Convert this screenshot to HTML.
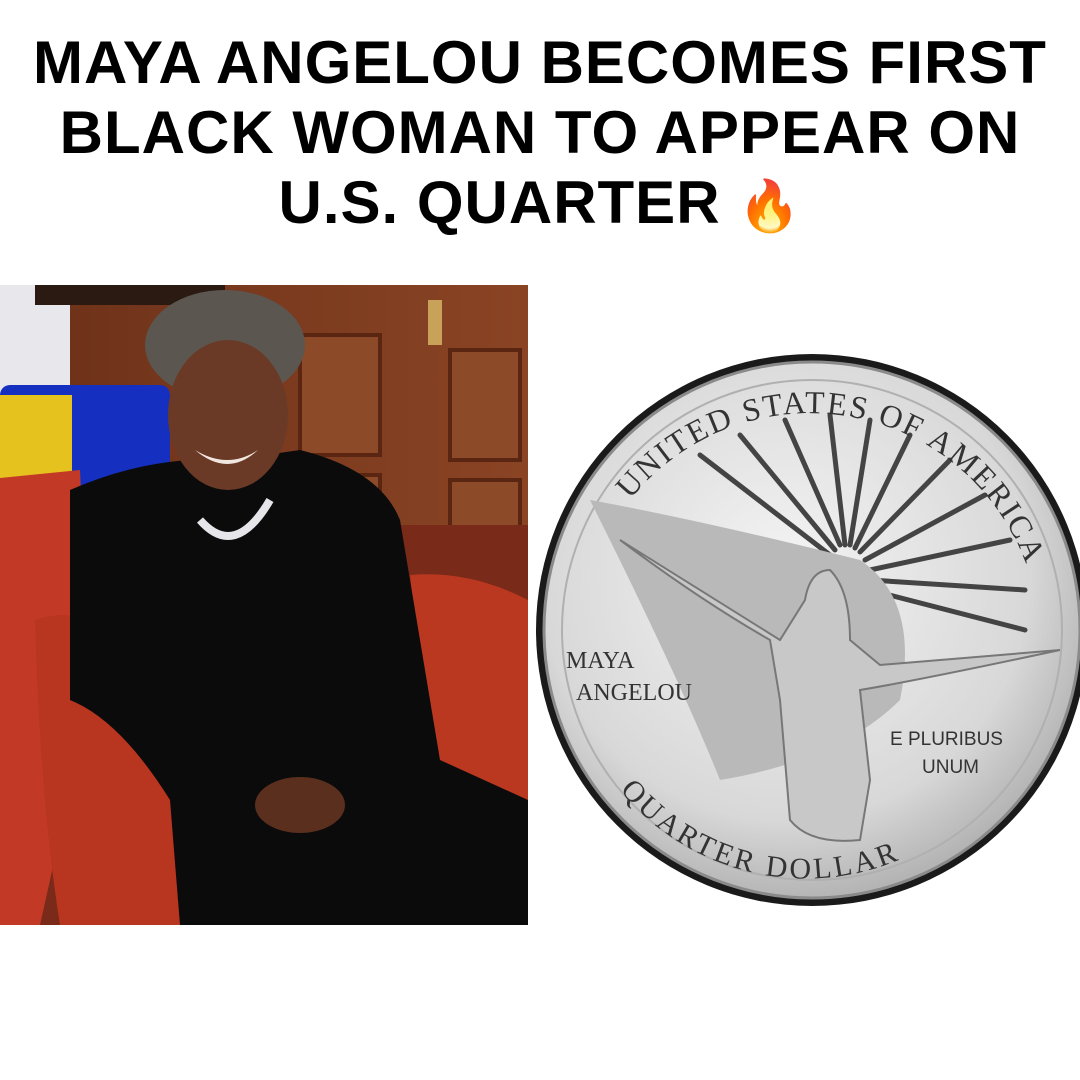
<!DOCTYPE html>
<html><head><meta charset="utf-8"><style>
html,body{margin:0;padding:0;background:#fff;width:1080px;height:1080px;overflow:hidden}
h1{position:absolute;top:28px;left:0;width:1080px;margin:0;text-align:center;font-family:"Liberation Sans",Arial,sans-serif;font-weight:900;font-size:60px;line-height:70px;color:#000;letter-spacing:1px;white-space:nowrap}
svg{position:absolute;left:0;top:0}
</style></head><body>
<svg width="1080" height="1080" viewBox="0 0 1080 1080">
<defs>
<radialGradient id="coin" cx="45%" cy="40%" r="65%"><stop offset="0" stop-color="#f4f4f4"/><stop offset="0.7" stop-color="#d8d8d8"/><stop offset="1" stop-color="#a9a9a9"/></radialGradient>
<linearGradient id="wood" x1="0" x2="1"><stop offset="0" stop-color="#6b3018"/><stop offset="1" stop-color="#8a4424"/></linearGradient>
<clipPath id="ph"><rect x="0" y="285" width="528" height="640"/></clipPath>
</defs>
<g clip-path="url(#ph)">
<rect x="0" y="285" width="528" height="640" fill="url(#wood)"/>
<rect x="0" y="285" width="70" height="110" fill="#e8e8ec"/>
<rect x="35" y="285" width="190" height="20" fill="#2a1a12"/>
<rect x="300" y="335" width="80" height="120" fill="#8d4a28" stroke="#5a2612" stroke-width="4"/>
<rect x="300" y="475" width="80" height="110" fill="#8d4a28" stroke="#5a2612" stroke-width="4"/>
<rect x="450" y="350" width="70" height="110" fill="#8d4a28" stroke="#5a2612" stroke-width="4"/>
<rect x="450" y="480" width="70" height="120" fill="#8d4a28" stroke="#5a2612" stroke-width="4"/>
<rect x="428" y="300" width="14" height="45" fill="#c9a25a"/>
<rect x="0" y="385" width="170" height="140" rx="10" fill="#1530c0"/>
<rect x="0" y="395" width="72" height="90" fill="#e6c21e"/>
<rect x="0" y="525" width="528" height="400" fill="#7a2a18"/>
<path d="M0 478 L80 470 L90 700 L40 925 L0 925Z" fill="#c23a26"/>
<path d="M35 620 Q90 600 180 660 L230 925 L60 925 Q40 800 35 620Z" fill="#b8351f"/>
<path d="M410 575 Q470 570 528 600 L528 810 L430 760Z" fill="#b9381f"/>
<path d="M70 490 Q150 455 230 460 L300 450 Q380 470 400 520 L430 700 L440 760 L528 800 L528 925 L180 925 L170 800 Q120 720 70 700Z" fill="#0b0b0c"/>
<ellipse cx="225" cy="345" rx="80" ry="55" fill="#5b5650"/>
<ellipse cx="228" cy="415" rx="60" ry="75" fill="#6b3a26"/>
<path d="M195 450 Q228 470 258 450 Q228 478 195 450Z" fill="#f0e6e0"/>
<path d="M200 520 Q235 560 270 500" stroke="#e6e6ea" stroke-width="8" fill="none"/>
<ellipse cx="300" cy="805" rx="45" ry="28" fill="#5a2f1e"/>
</g>
<circle cx="812" cy="630" r="276" fill="#1a1a1a"/>
<circle cx="812" cy="630" r="268" fill="url(#coin)" stroke="#8a8a8a" stroke-width="3"/>
<circle cx="812" cy="630" r="250" fill="none" stroke="#b0b0b0" stroke-width="2"/>
<g stroke="#444" stroke-width="5" stroke-linecap="round">
<line x1="830" y1="555" x2="700" y2="455"/><line x1="835" y1="550" x2="740" y2="435"/><line x1="840" y1="545" x2="785" y2="420"/><line x1="845" y1="545" x2="830" y2="415"/><line x1="850" y1="545" x2="870" y2="420"/><line x1="855" y1="548" x2="910" y2="435"/><line x1="860" y1="552" x2="950" y2="460"/><line x1="865" y1="560" x2="985" y2="495"/><line x1="870" y1="570" x2="1010" y2="540"/><line x1="870" y1="580" x2="1025" y2="590"/><line x1="870" y1="590" x2="1025" y2="630"/>
</g>
<path d="M590 500 Q700 520 860 560 Q920 600 900 700 Q840 760 720 780 Q680 680 590 500Z" fill="#b9b9b9"/>
<path d="M620 540 Q700 600 770 640 L780 700 L790 820 Q810 845 860 840 L870 780 L860 690 Q920 680 1060 650 L880 665 L850 640 Q850 590 830 570 Q810 570 805 600 L780 640 Q700 590 620 540Z" fill="#c8c8c8" stroke="#777" stroke-width="2"/>
<g font-family="Liberation Serif,serif" fill="#333">
<text x="566" y="668" font-size="24">MAYA</text>
<text x="576" y="700" font-size="24">ANGELOU</text>
<text x="890" y="745" font-size="19" font-family="Liberation Sans,sans-serif">E PLURIBUS</text>
<text x="922" y="773" font-size="19" font-family="Liberation Sans,sans-serif">UNUM</text>
</g>
<path id="arcT" d="M630 500 A230 230 0 0 1 1040 640" fill="none"/>
<text font-family="Liberation Serif,serif" font-size="32" fill="#333" letter-spacing="2"><textPath href="#arcT">UNITED STATES OF AMERICA</textPath></text>
<path id="arcB" d="M620 790 A240 240 0 0 0 1000 780" fill="none"/>
<text font-family="Liberation Serif,serif" font-size="30" fill="#333" letter-spacing="3"><textPath href="#arcB">QUARTER DOLLAR</textPath></text>
</svg>
<h1>MAYA ANGELOU BECOMES FIRST<br>BLACK WOMAN TO APPEAR ON<br>U.S. QUARTER <span style="font-size:50px">🔥</span></h1>
</body></html>
